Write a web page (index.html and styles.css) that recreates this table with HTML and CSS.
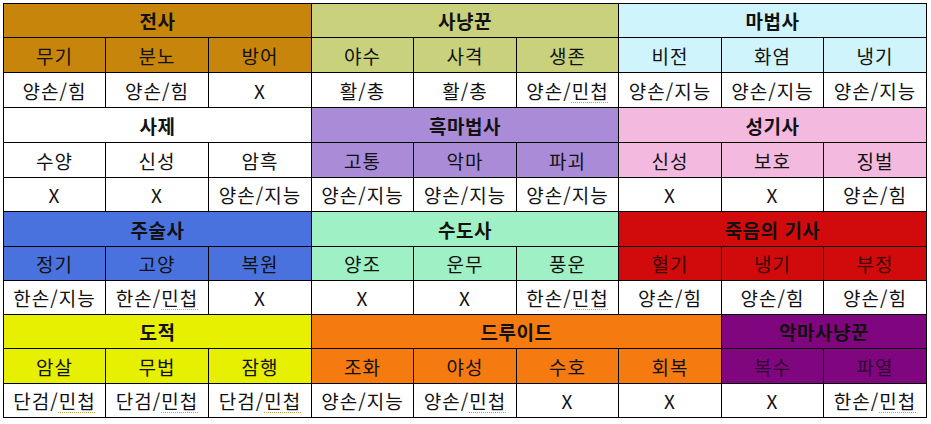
FILE: index.html
```html
<!DOCTYPE html>
<html lang="ko">
<head>
<meta charset="utf-8">
<title>직업별 무기</title>
<link rel="stylesheet" href="styles.css">
</head>
<body>
<div class="sheet">
  <div class="c h span3 warrior">전사</div>
  <div class="c h span3 hunter">사냥꾼</div>
  <div class="c h span3 mage">마법사</div>

  <div class="c warrior">무기</div>
  <div class="c warrior">분노</div>
  <div class="c warrior">방어</div>
  <div class="c hunter">야수</div>
  <div class="c hunter">사격</div>
  <div class="c hunter">생존</div>
  <div class="c mage">비전</div>
  <div class="c mage">화염</div>
  <div class="c mage">냉기</div>

  <div class="c w">양손/힘</div>
  <div class="c w">양손/힘</div>
  <div class="c w">X</div>
  <div class="c w">활/총</div>
  <div class="c w">활/총</div>
  <div class="c w">양손/<span class="sp">민첩</span></div>
  <div class="c w">양손/지능</div>
  <div class="c w">양손/지능</div>
  <div class="c w">양손/지능</div>

  <div class="c h span3 priest">사제</div>
  <div class="c h span3 warlock">흑마법사</div>
  <div class="c h span3 paladin">성기사</div>

  <div class="c priest">수양</div>
  <div class="c priest">신성</div>
  <div class="c priest">암흑</div>
  <div class="c warlock">고통</div>
  <div class="c warlock">악마</div>
  <div class="c warlock">파괴</div>
  <div class="c paladin">신성</div>
  <div class="c paladin">보호</div>
  <div class="c paladin">징벌</div>

  <div class="c w">X</div>
  <div class="c w">X</div>
  <div class="c w">양손/지능</div>
  <div class="c w">양손/지능</div>
  <div class="c w">양손/지능</div>
  <div class="c w">양손/지능</div>
  <div class="c w">X</div>
  <div class="c w">X</div>
  <div class="c w">양손/힘</div>

  <div class="c h span3 shaman">주술사</div>
  <div class="c h span3 monk">수도사</div>
  <div class="c h span3 dk">죽음의 기사</div>

  <div class="c shaman">정기</div>
  <div class="c shaman">고양</div>
  <div class="c shaman">복원</div>
  <div class="c monk">양조</div>
  <div class="c monk">운무</div>
  <div class="c monk">풍운</div>
  <div class="c dk">혈기</div>
  <div class="c dk">냉기</div>
  <div class="c dk">부정</div>

  <div class="c w">한손/지능</div>
  <div class="c w">한손/<span class="sp">민첩</span></div>
  <div class="c w">X</div>
  <div class="c w">X</div>
  <div class="c w">X</div>
  <div class="c w">한손/<span class="sp">민첩</span></div>
  <div class="c w">양손/힘</div>
  <div class="c w">양손/힘</div>
  <div class="c w">양손/힘</div>

  <div class="c h span3 rogue">도적</div>
  <div class="c h span4 druid">드루이드</div>
  <div class="c h span2 dh">악마사냥꾼</div>

  <div class="c rogue">암살</div>
  <div class="c rogue">무법</div>
  <div class="c rogue">잠행</div>
  <div class="c druid">조화</div>
  <div class="c druid">야성</div>
  <div class="c druid">수호</div>
  <div class="c druid">회복</div>
  <div class="c dh">복수</div>
  <div class="c dh">파열</div>

  <div class="c w">단검/<span class="sp">민첩</span></div>
  <div class="c w">단검/<span class="sp">민첩</span></div>
  <div class="c w">단검/<span class="sp">민첩</span></div>
  <div class="c w">양손/지능</div>
  <div class="c w">양손/<span class="sp">민첩</span></div>
  <div class="c w">X</div>
  <div class="c w">X</div>
  <div class="c w">X</div>
  <div class="c w">한손/<span class="sp">민첩</span></div>
</div>
</body>
</html>
```

FILE: styles.css
```css
html, body {
  margin: 0;
  padding: 0;
  background: #ffffff;
}

body {
  padding: 3px 0 0 3px;
  font-family: "Noto Sans CJK KR", "Noto Sans", sans-serif;
}

.sheet {
  display: grid;
  grid-template-columns: 101px 102px 102px 101px 102px 101px 102px 101px 102px;
  grid-template-rows: 33px 34px 34px 34px 34px 33px 34px 33px 33px 33px 34px 33px;
  gap: 1px;
  padding: 1px;
  background: #000000;
  width: max-content;
}

.c {
  display: flex;
  align-items: center;
  justify-content: center;
  font-size: 19px;
  letter-spacing: 1px;
  line-height: 1;
  color: #111111;
  background: #ffffff;
  white-space: nowrap;
}

.h {
  font-weight: 700;
  letter-spacing: 0.5px;
}

.span2 { grid-column: span 2; }
.span3 { grid-column: span 3; }
.span4 { grid-column: span 4; }

.w { background: #ffffff; }

.sp {
  text-decoration: underline dotted #d49a2a;
  text-decoration-thickness: 1px;
  text-underline-offset: 3px;
}

.warrior { background: #c8850c; }
.hunter  { background: #c9d17c; }
.mage    { background: #d0f4fc; }
.priest  { background: #ffffff; }
.warlock { background: #a98bd8; }
.paladin { background: #f4b9de; }
.shaman  { background: #4a72de; }
.monk    { background: #9ff0c4; }
.dk      { background: #d10b0b; }
.rogue   { background: #e6f000; }
.druid   { background: #f57a10; }
.dh      { background: #80067f; }

.dk:not(.h) { color: #3a0000; }
.dh:not(.h) { color: #300030; }
```
